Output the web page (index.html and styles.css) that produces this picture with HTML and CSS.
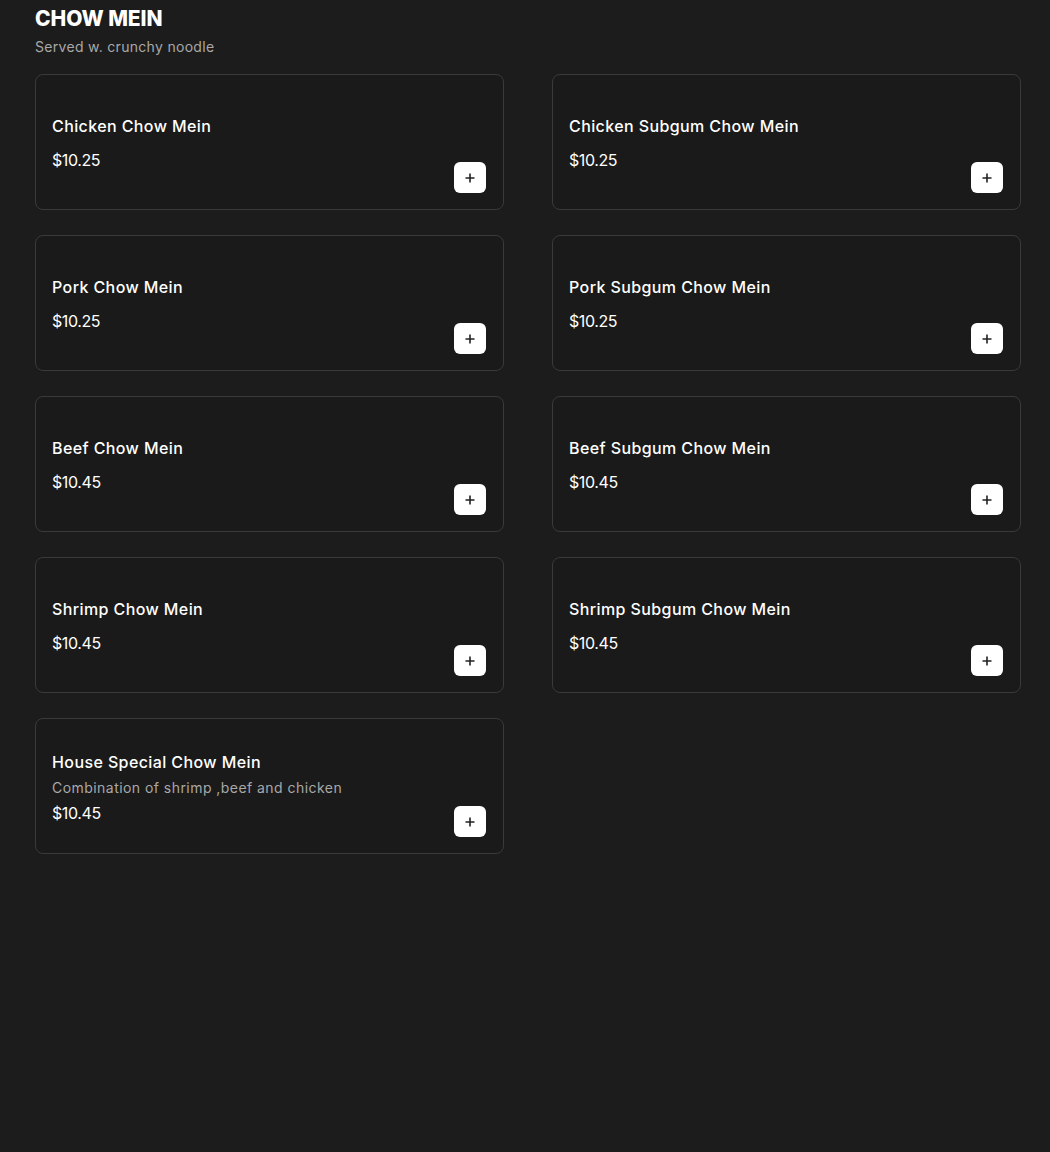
FILE: index.html
```html
<!DOCTYPE html>
<html lang="en">
<head>
    <meta charset="UTF-8">
    <meta name="viewport" content="width=device-width, initial-scale=1.0">
    <title>Chow Mein</title>
    <link rel="stylesheet" href="styles.css">
</head>
<body>

    <section class="category">
        <h2 class="category-title">CHOW MEIN</h2>
        <p class="category-note">Served w. crunchy noodle</p>

        <div class="items">
            <div class="item">
                <div class="item-info">
                    <h3 class="item-name">Chicken Chow Mein</h3>
                    <p class="item-price">$10.25</p>
                </div>
                <button class="add-btn" aria-label="Add">
                    <svg viewBox="0 0 12 12" width="12" height="12"><path d="M6 1.5v9M1.5 6h9"/></svg>
                </button>
            </div>
            <div class="item">
                <div class="item-info">
                    <h3 class="item-name">Chicken Subgum Chow Mein</h3>
                    <p class="item-price">$10.25</p>
                </div>
                <button class="add-btn" aria-label="Add">
                    <svg viewBox="0 0 12 12" width="12" height="12"><path d="M6 1.5v9M1.5 6h9"/></svg>
                </button>
            </div>
            <div class="item">
                <div class="item-info">
                    <h3 class="item-name">Pork Chow Mein</h3>
                    <p class="item-price">$10.25</p>
                </div>
                <button class="add-btn" aria-label="Add">
                    <svg viewBox="0 0 12 12" width="12" height="12"><path d="M6 1.5v9M1.5 6h9"/></svg>
                </button>
            </div>
            <div class="item">
                <div class="item-info">
                    <h3 class="item-name">Pork Subgum Chow Mein</h3>
                    <p class="item-price">$10.25</p>
                </div>
                <button class="add-btn" aria-label="Add">
                    <svg viewBox="0 0 12 12" width="12" height="12"><path d="M6 1.5v9M1.5 6h9"/></svg>
                </button>
            </div>
            <div class="item">
                <div class="item-info">
                    <h3 class="item-name">Beef Chow Mein</h3>
                    <p class="item-price">$10.45</p>
                </div>
                <button class="add-btn" aria-label="Add">
                    <svg viewBox="0 0 12 12" width="12" height="12"><path d="M6 1.5v9M1.5 6h9"/></svg>
                </button>
            </div>
            <div class="item">
                <div class="item-info">
                    <h3 class="item-name">Beef Subgum Chow Mein</h3>
                    <p class="item-price">$10.45</p>
                </div>
                <button class="add-btn" aria-label="Add">
                    <svg viewBox="0 0 12 12" width="12" height="12"><path d="M6 1.5v9M1.5 6h9"/></svg>
                </button>
            </div>
            <div class="item">
                <div class="item-info">
                    <h3 class="item-name">Shrimp Chow Mein</h3>
                    <p class="item-price">$10.45</p>
                </div>
                <button class="add-btn" aria-label="Add">
                    <svg viewBox="0 0 12 12" width="12" height="12"><path d="M6 1.5v9M1.5 6h9"/></svg>
                </button>
            </div>
            <div class="item">
                <div class="item-info">
                    <h3 class="item-name">Shrimp Subgum Chow Mein</h3>
                    <p class="item-price">$10.45</p>
                </div>
                <button class="add-btn" aria-label="Add">
                    <svg viewBox="0 0 12 12" width="12" height="12"><path d="M6 1.5v9M1.5 6h9"/></svg>
                </button>
            </div>
            <div class="item">
                <div class="item-info">
                    <h3 class="item-name has-desc">House Special Chow Mein</h3>
                    <p class="item-desc">Combination of shrimp ,beef and chicken</p>
                    <p class="item-price">$10.45</p>
                </div>
                <button class="add-btn" aria-label="Add">
                    <svg viewBox="0 0 12 12" width="12" height="12"><path d="M6 1.5v9M1.5 6h9"/></svg>
                </button>
            </div>
        </div>
    </section>

</body>
</html>
```

FILE: styles.css
```css
/* Global Styles */
body {
    font-family: 'Inter', 'Open Sans', sans-serif;
    background: #1c1c1c;
    color: #ffffff;
    margin: 0;
    height: 1152px;
}

.category {
    padding: 6px 30px 0 35px;
}

.category-title {
    font-size: 21px;
    font-weight: 800;
    letter-spacing: -0.1px;
    line-height: 26px;
    margin: 0;
}

.category-note {
    font-size: 14px;
    color: #a8a8a8;
    letter-spacing: 0.3px;
    line-height: 18px;
    margin: 6px 0 0;
}

/* Item grid */
.items {
    display: grid;
    grid-template-columns: 469px 469px;
    column-gap: 48px;
    row-gap: 25px;
    margin-top: 18px;
}

.item {
    display: flex;
    justify-content: space-between;
    min-height: 102px;
    padding: 16px 17px 16px 16px;
    background: #1a1a1a;
    border: 1px solid #3a3a3a;
    border-radius: 8px;
}

.item-info {
    display: flex;
    flex-direction: column;
    justify-content: center;
    padding-top: 2px;
}

.item-name {
    font-size: 16px;
    font-weight: 500;
    letter-spacing: 0.4px;
    line-height: 20px;
    margin: 0 0 14px;
}

.item-name.has-desc {
    margin-bottom: 6px;
}

.item-desc {
    font-size: 14px;
    color: #a8a8a8;
    letter-spacing: 0.45px;
    line-height: 20px;
    margin: 0 0 5px;
}

.item-price {
    font-size: 16px;
    letter-spacing: -0.4px;
    line-height: 20px;
    margin: 0;
}

.add-btn {
    align-self: flex-end;
    width: 32px;
    height: 31px;
    padding: 0;
    border: none;
    border-radius: 6px;
    background: #ffffff;
    display: flex;
    align-items: center;
    justify-content: center;
    cursor: pointer;
}

.add-btn svg {
    stroke: #222222;
    stroke-width: 1.6;
    fill: none;
}
```
